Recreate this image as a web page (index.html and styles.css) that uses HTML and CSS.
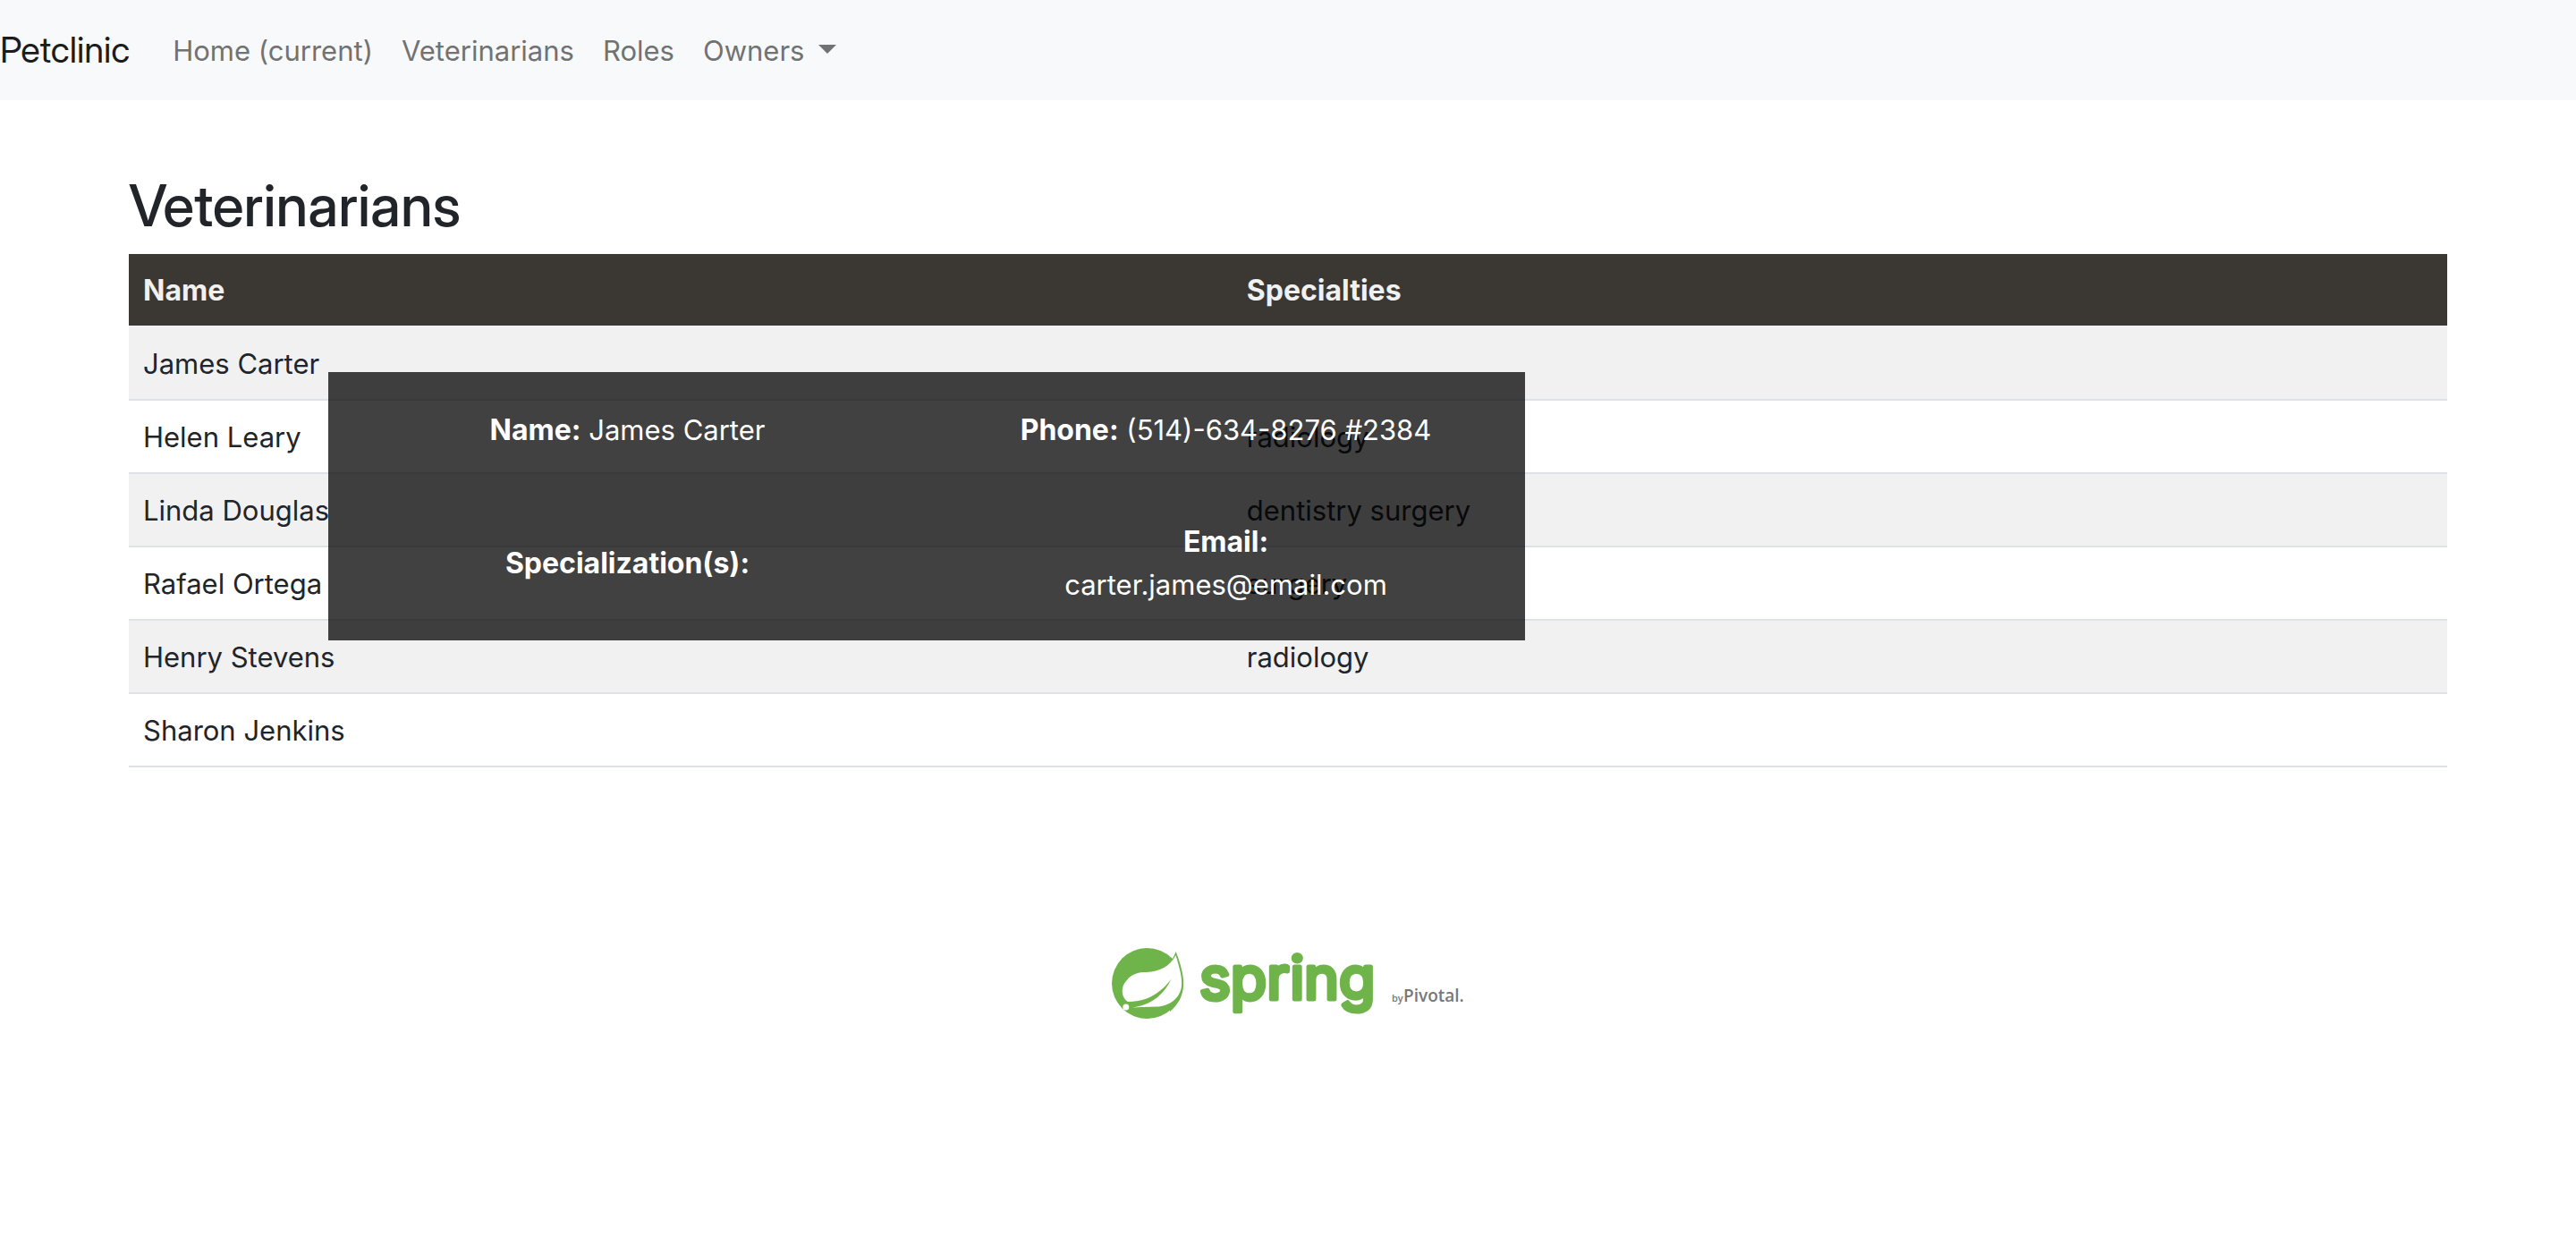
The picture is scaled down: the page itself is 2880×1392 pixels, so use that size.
FILE: index.html
```html
<!DOCTYPE html>
<html lang="en">
<head>
<meta charset="utf-8">
<title>Petclinic - Veterinarians</title>
<link rel="stylesheet" href="styles.css">
</head>
<body>
<header>
  <nav class="navbar">
    <a class="brand" href="#">Petclinic</a>
    <ul class="nav-list">
      <li><a class="nav-link" href="#">Home (current)</a></li>
      <li><a class="nav-link" href="#">Veterinarians</a></li>
      <li><a class="nav-link" href="#">Roles</a></li>
      <li><button class="nav-link dropdown" type="button" aria-haspopup="true">Owners</button></li>
    </ul>
  </nav>
</header>
<main class="container">
  <h1 class="title">Veterinarians</h1>
  <div class="table-area">
    <table class="vets">
      <thead>
        <tr><th class="col-name" scope="col">Name</th><th scope="col">Specialties</th></tr>
      </thead>
      <tbody>
        <tr><td>James Carter</td><td></td></tr>
        <tr><td>Helen Leary</td><td>radiology</td></tr>
        <tr><td>Linda Douglas</td><td>dentistry surgery</td></tr>
        <tr><td>Rafael Ortega</td><td>surgery</td></tr>
        <tr><td>Henry Stevens</td><td>radiology</td></tr>
        <tr><td>Sharon Jenkins</td><td></td></tr>
      </tbody>
    </table>
    <div class="popup" role="tooltip">
      <div><strong>Name:</strong> James Carter</div>
      <div><strong>Phone:</strong> (514)-634-8276 #2384</div>
      <div><strong>Specialization(s):</strong></div>
      <div><strong>Email:</strong><br>carter.james@email.com</div>
    </div>
  </div>
</main>
<footer class="footer">
  <svg class="logo" viewBox="0 0 400 84" role="img" aria-label="Spring by Pivotal">
    <circle class="green" cx="42.5" cy="41.5" r="39.5"/>
    <path class="green" d="M74.700 6C80 20 84 34 83 45C82 56 78 64 68 73L60 40L71 14Z"/>
    <path class="white" d="M74.500 10C78 22 82 34 81 44C80 58 67 67.500 53 67.500L26 68.500C46 66 61 55 69.500 36.500C58 52 43 62 21 62C13 57 13 45 19 39C25 31 32 29 42 29C56 28 68 23 74.500 10Z"/>
    <circle class="white" cx="18.800" cy="68" r="3.500"/>
    <text class="wordmark" x="101" y="59">spring</text>
    <text class="by" x="316" y="62">by</text>
    <text class="pivotal" x="329" y="62">Pivotal.</text>
  </svg>
</footer>
</body>
</html>
```
FILE: styles.css
```css
* {
  box-sizing: border-box;
}

body {
  margin: 0;
  background: #fff;
  color: #212529;
  font: 400 31px/48px Inter, "Liberation Sans", sans-serif;
}

.navbar {
  display: flex;
  align-items: center;
  padding: 16px 0;
  background: #f8f9fb;
}

.brand {
  margin-right: 32px;
  padding: 10px 0;
  color: #1b1c1d;
  font: 400 40px/60px "Inter Display", Inter, sans-serif;
  text-decoration: none;
}

.nav-list {
  display: flex;
  margin: 0;
  padding: 0;
  list-style: none;
}

.nav-link {
  display: block;
  padding: 17px 16px 15px;
  border: 0;
  background: none;
  color: #717272;
  font: inherit;
  text-decoration: none;
}

.dropdown::after {
  content: "";
  display: inline-block;
  margin-left: 16px;
  vertical-align: 8px;
  border: 10px solid transparent;
  border-top-color: currentColor;
  border-bottom: 0;
}

.container {
  width: 90%;
  margin: 0 auto;
  padding-top: 80px;
}

.title {
  margin: 0 0 16px;
  font: 500 64px/76px "Inter Display", Inter, sans-serif;
}

.table-area {
  position: relative;
}

.vets {
  width: 100%;
  border-spacing: 0;
  table-layout: fixed;
}

.col-name {
  width: 47.6%;
}

.vets th,
.vets td {
  height: 82px;
  padding: 17px 16px 15px;
  text-align: left;
  border-bottom: 2px solid #dee2e6;
}

.vets th {
  background: #3b3833;
  background-clip: padding-box;
  border-bottom-color: #f1f1f1;
  color: #f1f1f1;
  font-size: 32px;
  font-weight: 700;
}

.vets tbody tr:nth-child(odd) {
  background: #f1f1f1;
}

.popup {
  position: absolute;
  top: 132px;
  left: 223px;
  display: grid;
  grid-template-columns: 1fr 1fr;
  grid-template-rows: 128px 170px;
  align-items: center;
  width: 1338px;
  padding: 1px 0;
  background: rgba(0, 0, 0, 0.745);
  color: #fff;
  text-align: center;
}

.popup strong {
  font-size: 32px;
  font-weight: 700;
}

.footer {
  display: flex;
  justify-content: center;
  padding: 200px 0;
}

.logo {
  width: 400px;
  height: 84px;
  overflow: visible;
}

.green {
  fill: #6fb44a;
}

.white {
  fill: #fff;
}

.wordmark {
  fill: #6fb44a;
  stroke: #6fb44a;
  stroke-width: 5px;
  stroke-linejoin: round;
  font: 400 66px Inter, sans-serif;
}

.by {
  fill: #77787b;
  font: 600 11px "Open Sans", sans-serif;
}

.pivotal {
  fill: #77787b;
  font: 600 19px "Open Sans", sans-serif;
}
```
